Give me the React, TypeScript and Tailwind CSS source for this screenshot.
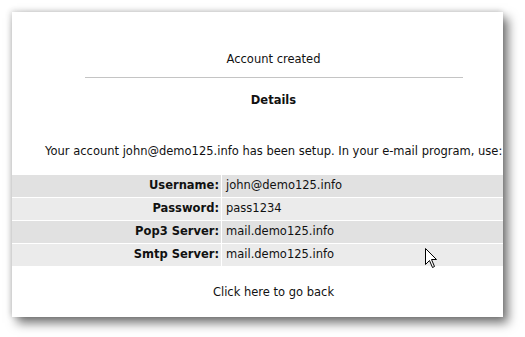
const rows = [
  { label: 'Username:', value: 'john@demo125.info', bg: 'bg-[#e1e1e1]' },
  { label: 'Password:', value: 'pass1234', bg: 'bg-[#ebebeb]' },
  { label: 'Pop3 Server:', value: 'mail.demo125.info', bg: 'bg-[#e1e1e1]' },
  { label: 'Smtp Server:', value: 'mail.demo125.info', bg: 'bg-[#ebebeb]' },
]

const App = () => {
  return (
    <div className="w-[525px] h-[337px] bg-white pl-[12px] pt-[12px] font-['DejaVu_Sans',Verdana,sans-serif] text-[11.5px] text-[#111]">
      <div className="relative w-[491px] h-[305px] bg-white overflow-hidden shadow-[5px_6px_10px_rgba(0,0,0,0.55),-1px_-1px_6px_rgba(0,0,0,0.18)]">
        {/* page content is wider than the window, so it is cut on the right */}
        <div className="w-[523px] flex flex-col">
          <div className="pt-[39px] text-center leading-[16px]">Account created</div>
          <div className="mx-auto mt-[10px] w-[378px] h-px bg-[#c4c4c4]" />
          <div className="mt-[14px] text-center font-bold leading-[16px]">Details</div>

          {/* intro */}
          <div className="mt-[35px] pl-[33px] whitespace-nowrap leading-[16px]">
            Your account john@demo125.info has been setup. In your e-mail program, use:
          </div>

          {/* settings table */}
          <div className="mt-[16px] flex flex-col gap-px">
            {rows.map((row, i) => (
              <div key={i} className={`flex h-[22px] ${row.bg}`}>
                <div className="w-[209px] pr-[2px] flex items-center justify-end font-bold">{row.label}</div>
                <div className="w-px bg-white" />
                <div className="flex-1 pl-[4px] flex items-center">{row.value}</div>
              </div>
            ))}
          </div>

          <div className="mt-[18px] text-center leading-[16px]">Click here to go back</div>
        </div>

        {/* mouse pointer */}
        <svg className="absolute left-[413px] top-[236px]" width="13" height="21" viewBox="0 0 13 21">
          <path d="M0.5 0.5 L0.5 16.5 L4.5 12.5 L7.5 19.5 L9.5 18.5 L6.5 11.5 L11.5 11.5 Z" fill="white" stroke="black" strokeWidth="1" />
        </svg>
      </div>
    </div>
  )
}

export default App
